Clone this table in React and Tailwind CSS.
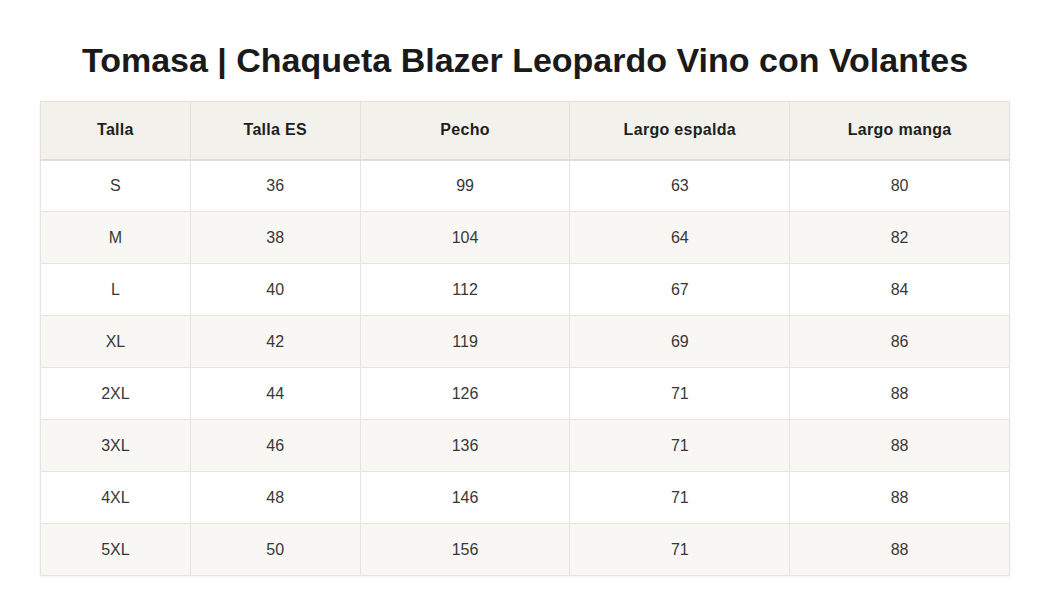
import React from 'react';

const rows = [
  ['S', '36', '99', '63', '80'],
  ['M', '38', '104', '64', '82'],
  ['L', '40', '112', '67', '84'],
  ['XL', '42', '119', '69', '86'],
  ['2XL', '44', '126', '71', '88'],
  ['3XL', '46', '136', '71', '88'],
  ['4XL', '48', '146', '71', '88'],
  ['5XL', '50', '156', '71', '88'],
];

const headers = ['Talla', 'Talla ES', 'Pecho', 'Largo espalda', 'Largo manga'];
const widths = ['w-[150px]', 'w-[170px]', 'w-[210px]', 'w-[220px]', 'w-[220px]'];

const App = () => {
  return (
    <div className="min-h-screen bg-white font-['Liberation_Sans',Arial,sans-serif] pt-[38px] px-[40px]">
      <h1 className="text-center text-[34px] font-bold text-[#1a1a1a] leading-[44px] mb-[19px]">
        Tomasa | Chaqueta Blazer Leopardo Vino con Volantes
      </h1>
      <table className="w-[970px] border-collapse border border-[#e3e1dc] shadow-[0_1px_3px_rgba(0,0,0,0.06)]">
        <thead>
          <tr className="bg-[#f2f1ec]">
            {headers.map((h, i) => (
              <th
                key={h}
                className={`${widths[i]} h-[58px] border border-[#e3e1dc] border-b-2 border-b-[#e0ddd6] text-[16px] font-bold text-[#1f1f1f] text-center tracking-[0.3px]`}
              >
                {h}
              </th>
            ))}
          </tr>
        </thead>
        <tbody>
          {rows.map((r, ri) => (
            <tr key={ri} className={ri % 2 === 1 ? 'bg-[#f8f7f3]' : 'bg-white'}>
              {r.map((c, ci) => (
                <td
                  key={ci}
                  className="h-[52px] border border-[#e6e4e0] text-center text-[16px] text-[#383838]"
                >
                  {c}
                </td>
              ))}
            </tr>
          ))}
        </tbody>
      </table>
    </div>
  );
};

export default App;
